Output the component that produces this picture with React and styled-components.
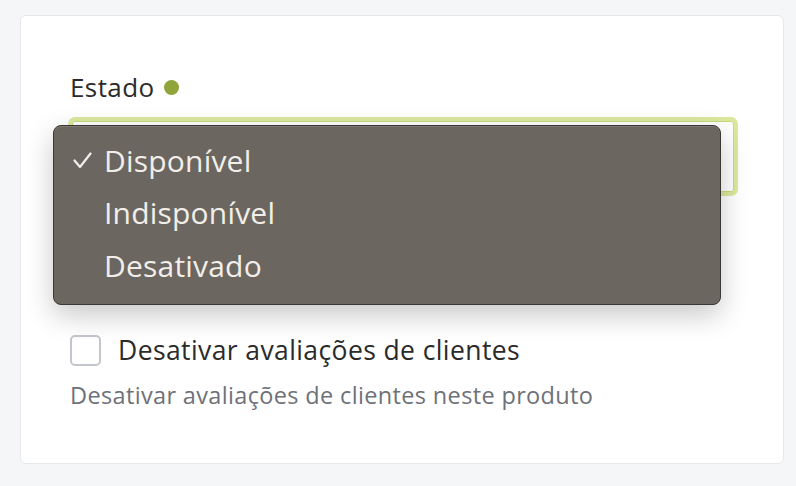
import React from 'react'
import styled, { createGlobalStyle } from 'styled-components'

const GlobalStyle = createGlobalStyle`
  html, body {
    margin: 0;
    padding: 0;
    background: #f5f6f8;
  }
  body {
    font-family: 'Open Sans', 'Noto Sans', sans-serif;
    -webkit-font-smoothing: antialiased;
  }
`

const options = ['Disponível', 'Indisponível', 'Desativado']

export default function App() {
  return (
    <>
      <GlobalStyle />
      <Page>
        <Card>
          <Label>
            Estado <StatusDot />
          </Label>
          <Field>
            <SelectBox />
            <Menu>
              {options.map((opt, i) => (
                <MenuItem key={opt}>
                  <Check>
                    {i === 0 && (
                      <svg width="19" height="17" viewBox="0 0 19 17">
                        <polyline
                          points="1.5,8.5 7,15 17.5,1.5"
                          fill="none"
                          stroke="#f2eee9"
                          strokeWidth="2.2"
                          strokeLinecap="round"
                          strokeLinejoin="round"
                        />
                      </svg>
                    )}
                  </Check>
                  {opt}
                </MenuItem>
              ))}
            </Menu>
          </Field>
          <CheckRow>
            <CheckBox />
            <CheckLabel>Desativar avaliações de clientes</CheckLabel>
          </CheckRow>
          <Help>Desativar avaliações de clientes neste produto</Help>
        </Card>
      </Page>
    </>
  )
}

const Page = styled.div`
  padding: 15px 12px 22px 20px;
`

const Card = styled.div`
  box-sizing: border-box;
  height: 449px;
  background: #ffffff;
  border: 1px solid #e6e8eb;
  border-radius: 6px;
  padding: 53px 45px 0 49px;
`

const Label = styled.div`
  display: flex;
  align-items: center;
  gap: 9px;
  font-size: 26px;
  letter-spacing: 0.4px;
  line-height: 36px;
  color: #2b2b2b;
`

const StatusDot = styled.span`
  width: 15px;
  height: 15px;
  border-radius: 50%;
  background: #8fa43a;
  margin-top: 1px;
`

const Field = styled.div`
  position: relative;
  margin-top: 12px;
  margin-left: -2px;
`

const SelectBox = styled.div`
  box-sizing: border-box;
  height: 79px;
  width: 670px;
  border: 4px solid #dbe99e;
  border-radius: 7px;
  background: #fff;
  box-shadow: inset 0 0 0 1px #c9da7c;
`

const Menu = styled.div`
  position: absolute;
  left: -15px;
  top: 8px;
  box-sizing: border-box;
  width: 668px;
  padding: 8px 0 12px;
  background: #6c6661;
  border: 1px solid #3b3734;
  border-radius: 8px;
  box-shadow: 0 10px 28px rgba(0, 0, 0, 0.22), inset 0 1px 0 rgba(255, 255, 255, 0.12);
  z-index: 10;
`

const MenuItem = styled.div`
  display: flex;
  align-items: center;
  height: 52.5px;
  padding-left: 19px;
  font-size: 30px;
  letter-spacing: 0.2px;
  color: #f2eee9;
`

const Check = styled.span`
  display: flex;
  align-items: center;
  width: 31px;
  svg {
    display: block;
  }
`

const CheckRow = styled.div`
  display: flex;
  align-items: center;
  gap: 17px;
  margin-top: 138px;
`

const CheckBox = styled.span`
  box-sizing: border-box;
  width: 31px;
  height: 31px;
  border: 2px solid #c3c6cc;
  border-radius: 5px;
  background: #fff;
`

const CheckLabel = styled.span`
  font-size: 26.5px;
  letter-spacing: 0.4px;
  line-height: 32px;
  color: #2b2b2b;
`

const Help = styled.div`
  margin-top: 14px;
  font-size: 23.5px;
  letter-spacing: 0.35px;
  line-height: 30px;
  color: #6e7178;
`
